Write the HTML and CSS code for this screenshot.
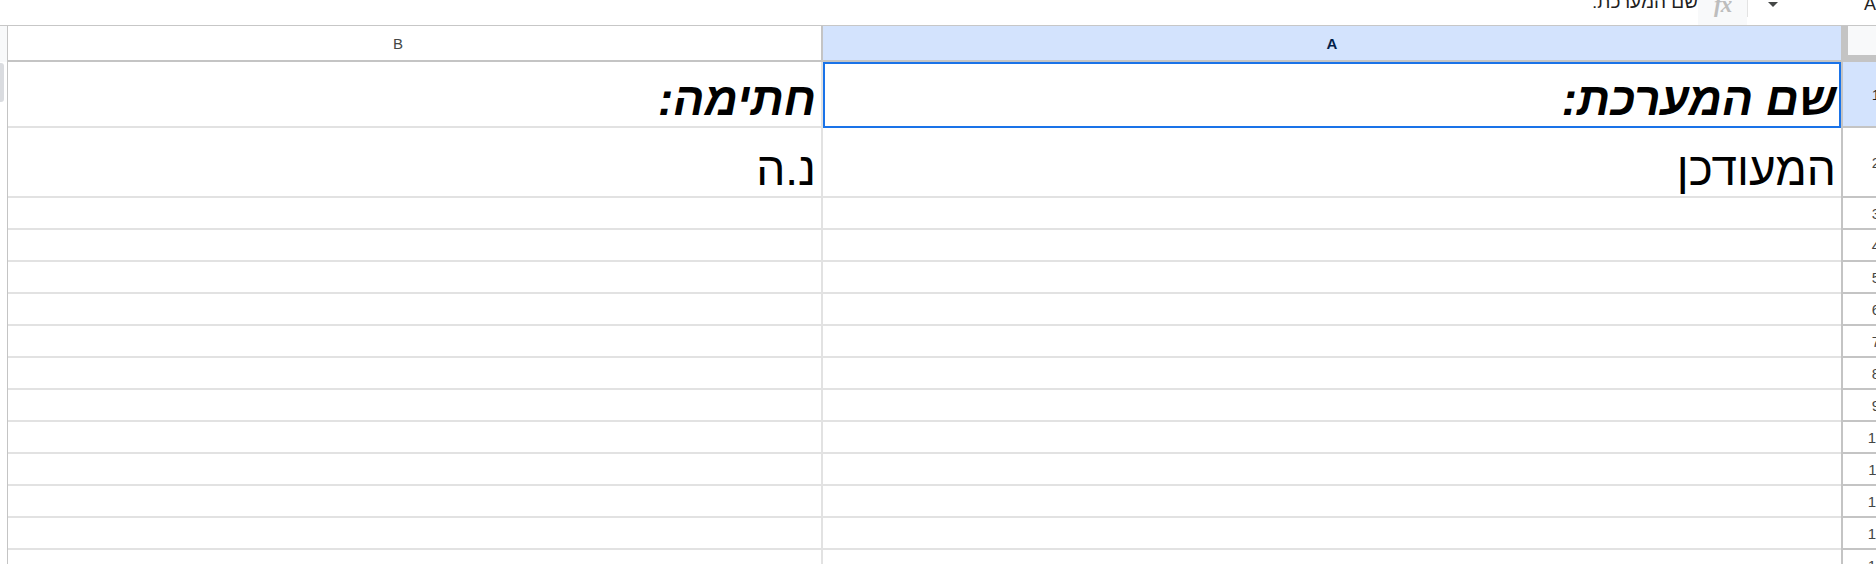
FILE: index.html
```html
<!DOCTYPE html>
<html lang="he">
<head>
<meta charset="utf-8">
<title>Sheet</title>
<link rel="stylesheet" href="styles.css">
</head>
<body>
<div class="app">
  <div class="topbar">
    <div class="formula" dir="rtl">שם המערכת:</div>
    <div class="fx"><span class="fx-label">fx</span></div>
    <div class="tb-sep"></div>
    <div class="namebox">
      <span class="caret"></span>
      <span class="nb-text">A</span>
    </div>
  </div>
  <div class="sheet">
    <div class="strip">
      <div class="strip-head"></div>
      <div class="thumb"></div>
    </div>

    <div class="colhead colhead-b"><span>B</span></div>
    <div class="colhead colhead-a"><span>A</span></div>
    <div class="corner"></div>

    <div class="cell row-1"><span class="txt bold" dir="rtl">חתימה:</span></div>
    <div class="cell cell-a row-1 selected"><span class="txt bold" dir="rtl">שם המערכת:</span></div>
    <div class="rowhead rowhead-sel row-1">1</div>

    <div class="cell row-2"><span class="txt" dir="rtl">נ.ה</span></div>
    <div class="cell cell-a row-2"><span class="txt" dir="rtl">המעודכן</span></div>
    <div class="rowhead row-2">2</div>

    <div class="cell"></div><div class="cell cell-a"></div><div class="rowhead">3</div>
    <div class="cell"></div><div class="cell cell-a"></div><div class="rowhead">4</div>
    <div class="cell"></div><div class="cell cell-a"></div><div class="rowhead">5</div>
    <div class="cell"></div><div class="cell cell-a"></div><div class="rowhead">6</div>
    <div class="cell"></div><div class="cell cell-a"></div><div class="rowhead">7</div>
    <div class="cell"></div><div class="cell cell-a"></div><div class="rowhead">8</div>
    <div class="cell"></div><div class="cell cell-a"></div><div class="rowhead">9</div>
    <div class="cell"></div><div class="cell cell-a"></div><div class="rowhead">10</div>
    <div class="cell"></div><div class="cell cell-a"></div><div class="rowhead">11</div>
    <div class="cell"></div><div class="cell cell-a"></div><div class="rowhead">12</div>
    <div class="cell"></div><div class="cell cell-a"></div><div class="rowhead">13</div>
    <div class="cell"></div><div class="cell cell-a"></div><div class="rowhead">14</div>
  </div>
</div>
</body>
</html>
```

FILE: styles.css
```css
html, body {
  margin: 0;
  padding: 0;
  background: #ffffff;
  overflow: hidden;
}

body {
  width: 1876px;
  height: 564px;
  font-family: "Liberation Sans", Arial, "DejaVu Sans", sans-serif;
  color: #000000;
}

.app {
  width: 1876px;
  height: 564px;
  overflow: hidden;
}

/* ---------- formula bar ---------- */
.topbar {
  height: 25px;
  border-bottom: 1px solid #c7c7c7;
  display: flex;
  justify-content: flex-start;
  align-items: flex-start;
  padding-left: 1588px;
  overflow: hidden;
  box-sizing: content-box;
}

.formula {
  width: 119px;
  font-size: 19px;
  line-height: 19px;
  margin-top: -8px;
  color: #1f1f1f;
  text-align: right;
  white-space: nowrap;
  box-sizing: border-box;
}

.fx {
  width: 53px;
  height: 25px;
  background: #f8f9fa;
  display: flex;
  justify-content: center;
  align-items: flex-start;
}

.fx-label {
  font-family: "Liberation Serif", "Times New Roman", serif;
  font-style: italic;
  font-weight: bold;
  font-size: 23px;
  line-height: 23px;
  margin-top: -7px;
  color: #bdbdbd;
  letter-spacing: -1px;
}

.tb-sep {
  width: 1px;
  height: 17px;
  background: #e3e3e3;
}

.namebox {
  flex: 1;
  display: flex;
  align-items: flex-start;
}

.caret {
  width: 0;
  height: 0;
  border-left: 5px solid transparent;
  border-right: 5px solid transparent;
  border-top: 5px solid #444746;
  margin-left: 20px;
  margin-top: 2px;
}

.nb-text {
  font-size: 18px;
  line-height: 18px;
  margin-left: 86px;
  margin-top: -5px;
  color: #1f1f1f;
}

/* ---------- grid ---------- */
.sheet {
  display: grid;
  grid-template-columns: 8px 815px 1018px 68px;
  grid-template-rows: 36px 66px 70px repeat(12, 32px);
  width: 1909px;
}

.strip {
  grid-row: 1 / -1;
  grid-column: 1;
  border-right: 1px solid #c4c4c4;
  display: flex;
  flex-direction: column;
}

.strip-head {
  height: 36px;
  background: #f8f9fa;
  flex: none;
}

.thumb {
  width: 4px;
  height: 39px;
  margin-top: 1px;
  background: #dadce0;
  border-radius: 0 3px 3px 0;
  flex: none;
}

.colhead {
  display: flex;
  align-items: center;
  justify-content: center;
  font-size: 15px;
  border-bottom: 2px solid #c4c4c4;
  box-sizing: border-box;
  line-height: 1;
}

.colhead-b {
  background: #ffffff;
  color: #444746;
  border-right: 2px solid #c4c4c4;
  padding-right: 33px;
}

.colhead-a {
  background: #d3e3fd;
  color: #041e49;
  font-weight: bold;
}

.corner {
  background: #f8f9fa;
  border-left: 7px solid #c4c4c4;
  border-bottom: 7px solid #c4c4c4;
  box-sizing: border-box;
}

.cell {
  display: flex;
  align-items: flex-end;
  justify-content: flex-end;
  border-bottom: 2px solid #e2e2e2;
  border-right: 2px solid #e2e2e2;
  box-sizing: border-box;
  overflow: hidden;
}

.cell-a {
  border-right: none;
}

.selected {
  outline: 2px solid #1a73e8;
  outline-offset: -2px;
  border-bottom-color: #1a73e8;
}

.txt {
  font-size: 46px;
  line-height: 1;
  padding-right: 5px;
  padding-bottom: 4px;
  white-space: nowrap;
  color: #000000;
}

.bold {
  font-weight: bold;
  font-style: italic;
}

.rowhead {
  border-left: 2px solid #c4c4c4;
  border-bottom: 2px solid #c4c4c4;
  box-sizing: border-box;
  display: flex;
  align-items: center;
  justify-content: center;
  font-size: 15px;
  line-height: 1;
  color: #444746;
  background: #ffffff;
}

.rowhead-sel {
  background: #d3e3fd;
  color: #1f1f1f;
}
```
